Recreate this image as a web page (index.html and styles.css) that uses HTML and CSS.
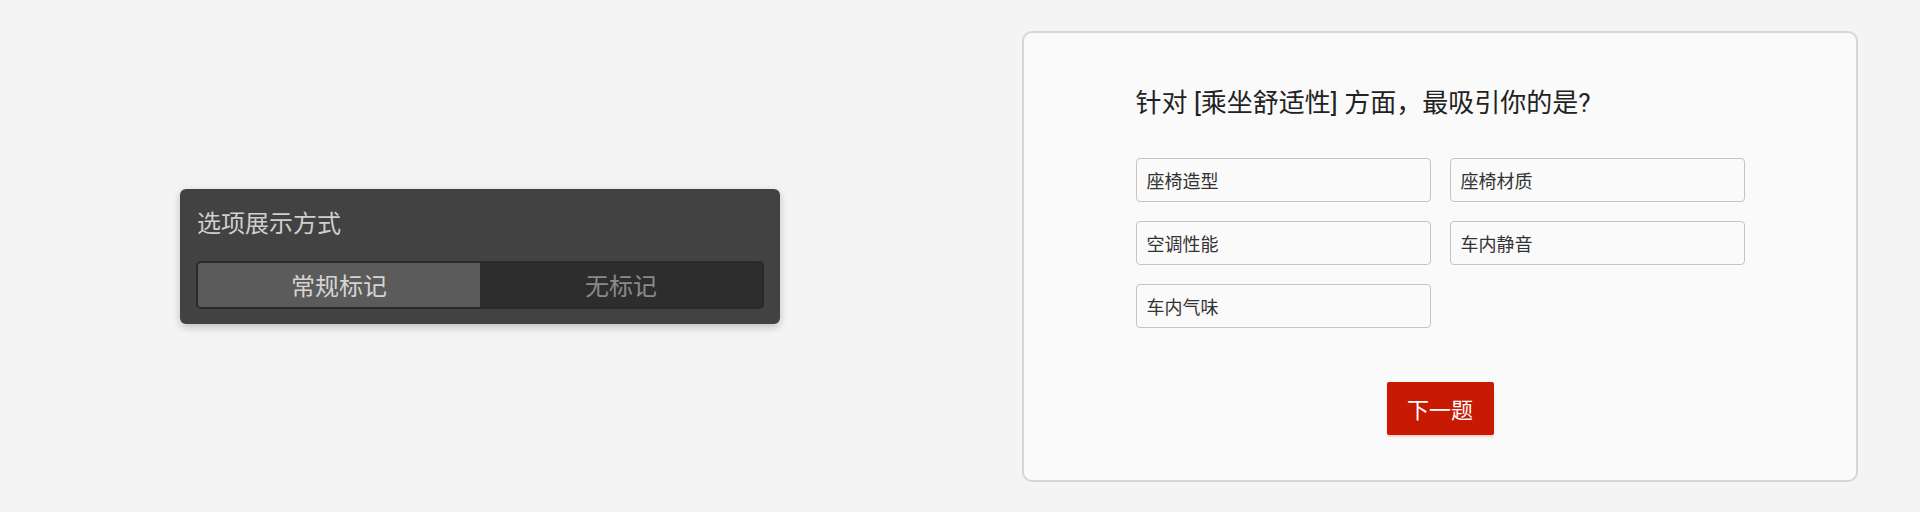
FILE: index.html
```html
<!DOCTYPE html>
<html lang="zh-CN">
<head>
<meta charset="utf-8">
<title>选项展示方式</title>
<link rel="stylesheet" href="styles.css">
</head>
<body>
<div class="page">
  <div class="half">
    <div class="panel">
      <div class="panel-title">选项展示方式</div>
      <div class="segmented">
        <div class="seg seg-active">常规标记</div>
        <div class="seg">无标记</div>
      </div>
    </div>
  </div>
  <div class="half">
    <div class="card">
      <div class="content">
        <div class="question">针对 [乘坐舒适性] 方面，最吸引你的是?</div>
        <div class="options">
          <div class="option">座椅造型</div>
          <div class="option">座椅材质</div>
          <div class="option">空调性能</div>
          <div class="option">车内静音</div>
          <div class="option">车内气味</div>
        </div>
        <div class="actions">
          <button class="next">下一题</button>
        </div>
      </div>
    </div>
  </div>
</div>
</body>
</html>
```
FILE: styles.css
```css
* { box-sizing: border-box; }
html, body {
  margin: 0;
  padding: 0;
  background: #f4f4f4;
  font-family: "Noto Sans CJK SC", "Noto Sans", sans-serif;
}
.page {
  display: grid;
  grid-template-columns: 1fr 1fr;
  width: 1920px;
  height: 512px;
}
.half {
  display: flex;
  align-items: center;
  justify-content: center;
}
.panel {
  width: 600px;
  height: 135px;
  background: #424242;
  border-radius: 6px;
  padding: 15px 16px 15px 16px;
  box-shadow: 0 3px 8px rgba(0, 0, 0, 0.22);
}
.panel-title {
  font-size: 24px;
  line-height: 36px;
  color: #cfcfcf;
  margin-bottom: 21px;
  padding-left: 1px;
}
.segmented {
  display: flex;
  height: 48px;
  border: 2px solid #2a2a2a;
  border-radius: 5px;
  background: #2d2d2d;
  overflow: hidden;
}
.seg {
  flex: 1;
  display: flex;
  align-items: center;
  justify-content: center;
  font-size: 24px;
  color: #8a8a8a;
}
.seg-active {
  background: #5b5b5b;
  color: #d4d4d4;
}
.card {
  width: 836px;
  height: 451px;
  background: #fafafa;
  border: 2px solid #d6d6d6;
  border-radius: 10px;
  padding-top: 52px;
}
.content {
  width: 609px;
  margin: 0 auto;
}
.question {
  font-family: "Roboto", "Noto Sans CJK SC", sans-serif;
  font-size: 26px;
  line-height: 36px;
  color: #222;
  margin-bottom: 37px;
}
.options {
  display: grid;
  grid-template-columns: 295px 295px;
  column-gap: 19px;
  row-gap: 19px;
}
.option {
  height: 44px;
  border: 1.5px solid #c4c4c4;
  border-radius: 4px;
  background: #fafafa;
  display: flex;
  align-items: center;
  padding-left: 10px;
  font-size: 18px;
  color: #333;
}
.actions {
  display: flex;
  justify-content: center;
  margin-top: 54px;
}
.next {
  width: 107px;
  height: 53px;
  border: none;
  border-radius: 2px;
  background: #c81a02;
  color: #fff;
  font-family: "Noto Sans CJK SC", "Noto Sans", sans-serif;
  font-size: 22px;
  padding: 0;
  box-shadow: 0 2px 2px rgba(200, 26, 2, 0.18);
}
```
